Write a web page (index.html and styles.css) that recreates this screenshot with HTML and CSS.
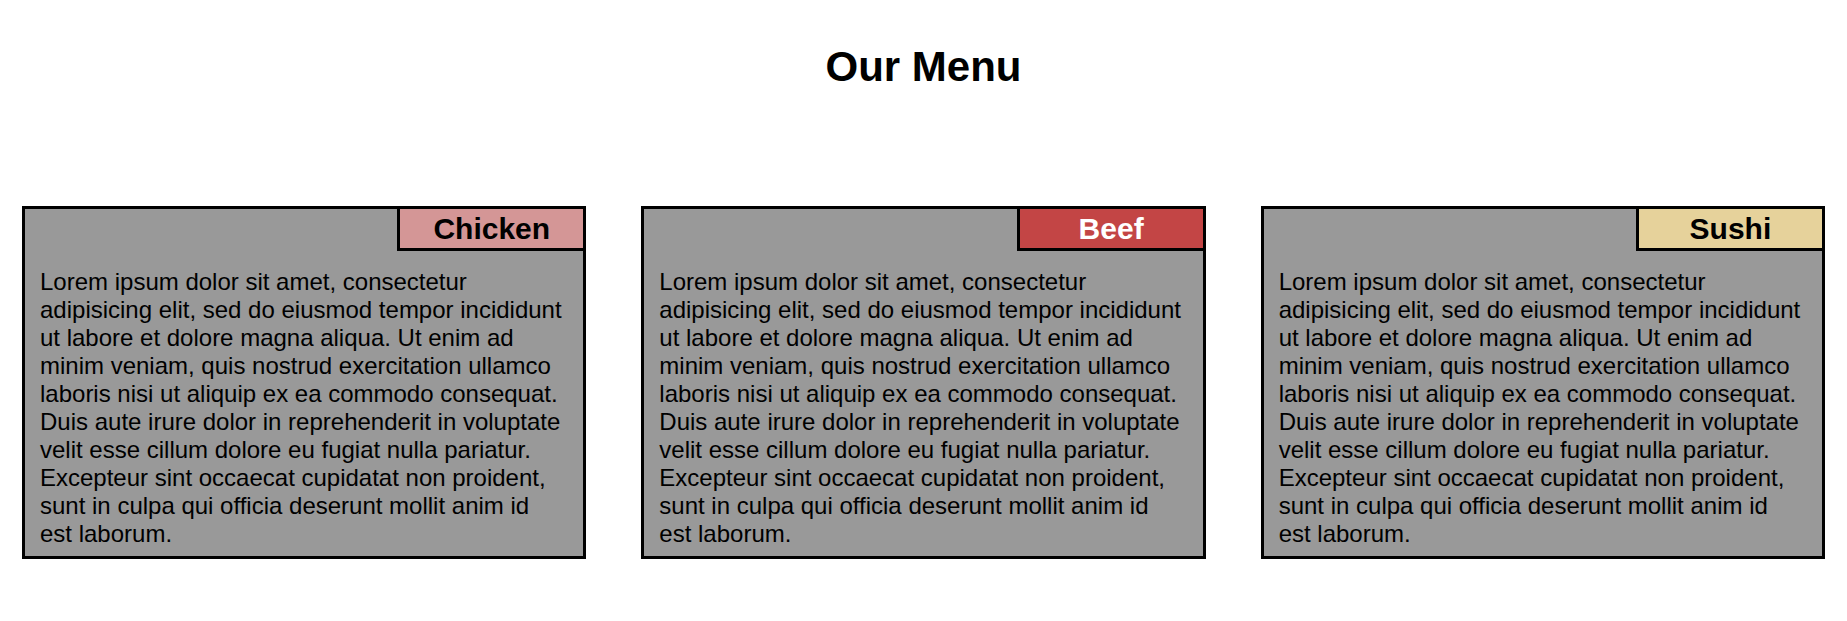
FILE: index.html
```html
<!DOCTYPE html>
<html lang="en">
<head>
<meta charset="utf-8">
<title>Our Menu</title>
<link rel="stylesheet" href="styles.css">
</head>
<body>
<h1 class="title">Our Menu</h1>
<div class="menu">
  <div class="card">
    <div class="label label-chicken">Chicken</div>
    <p class="desc">Lorem ipsum dolor sit amet, consectetur adipisicing elit, sed do eiusmod tempor incididunt ut labore et dolore magna aliqua. Ut enim ad minim veniam, quis nostrud exercitation ullamco laboris nisi ut aliquip ex ea commodo consequat. Duis aute irure dolor in reprehenderit in voluptate velit esse cillum dolore eu fugiat nulla pariatur. Excepteur sint occaecat cupidatat non proident, sunt in culpa qui officia deserunt mollit anim id est laborum.</p>
  </div>
  <div class="card">
    <div class="label label-beef">Beef</div>
    <p class="desc">Lorem ipsum dolor sit amet, consectetur adipisicing elit, sed do eiusmod tempor incididunt ut labore et dolore magna aliqua. Ut enim ad minim veniam, quis nostrud exercitation ullamco laboris nisi ut aliquip ex ea commodo consequat. Duis aute irure dolor in reprehenderit in voluptate velit esse cillum dolore eu fugiat nulla pariatur. Excepteur sint occaecat cupidatat non proident, sunt in culpa qui officia deserunt mollit anim id est laborum.</p>
  </div>
  <div class="card">
    <div class="label label-sushi">Sushi</div>
    <p class="desc">Lorem ipsum dolor sit amet, consectetur adipisicing elit, sed do eiusmod tempor incididunt ut labore et dolore magna aliqua. Ut enim ad minim veniam, quis nostrud exercitation ullamco laboris nisi ut aliquip ex ea commodo consequat. Duis aute irure dolor in reprehenderit in voluptate velit esse cillum dolore eu fugiat nulla pariatur. Excepteur sint occaecat cupidatat non proident, sunt in culpa qui officia deserunt mollit anim id est laborum.</p>
  </div>
</div>
</body>
</html>
```
FILE: styles.css
```css
body {
  margin: 8px;
  font-family: "Liberation Sans", Arial, sans-serif;
  color: #000;
  background: #fff;
}

.title {
  margin: 36px 0 116px;
  text-align: center;
  font-size: 42px;
  line-height: 46px;
  font-weight: bold;
}

.menu {
  display: grid;
  grid-template-columns: repeat(3, 1fr);
  gap: 55px;
  padding: 0 14px;
}

.card {
  border: 3px solid #000;
  background: #999999;
}

.label {
  box-sizing: border-box;
  width: 33.333%;
  margin-left: auto;
  border-left: 3px solid #000;
  border-bottom: 3px solid #000;
  text-align: center;
  font-weight: bold;
  font-size: 30px;
  line-height: 39px;
}

.label-chicken {
  background: #d49696;
}

.label-beef {
  background: #c34545;
  color: #fff;
}

.label-sushi {
  background: #e6d29b;
}

.desc {
  margin: 17px 20px 8px 15px;
  font-size: 24px;
  line-height: 28px;
}
```
